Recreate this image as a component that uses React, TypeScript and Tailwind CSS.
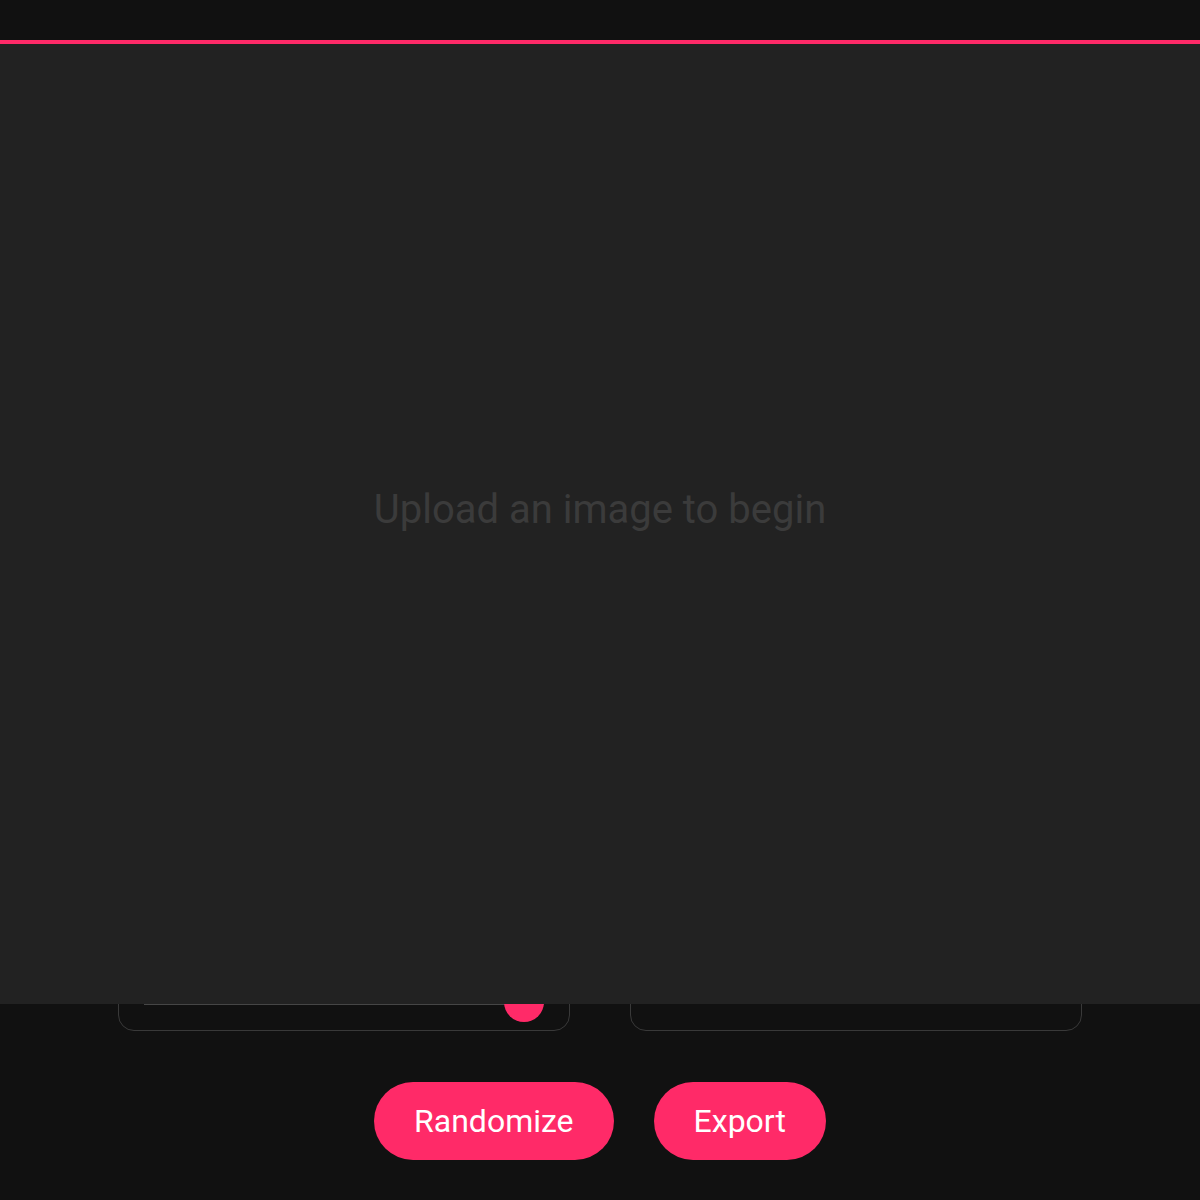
export default function App() {
  return (
    <div className="min-h-screen bg-[#111111] text-white" style={{ fontFamily: 'Roboto, "Noto Sans", sans-serif' }}>
      {/* Header */}
      <header className="h-11 border-b-4 border-[#ff2a68] bg-[#111111]" />

      {/* Preview canvas, fixed over the controls */}
      <div className="fixed left-0 right-0 top-11 z-10 flex h-[80vh] items-center justify-center bg-[#222222] pb-7">
        <p className="text-[40px] text-[#3b3b3b]">Upload an image to begin</p>
      </div>

      {/* Controls */}
      <main className="mx-auto w-[964px] pt-[869px] pb-10">
        <div className="grid grid-cols-2 gap-[60px]">
          <section className="flex flex-col gap-4 rounded-2xl border border-[#393939] px-[25px] pt-6 pb-2">
            <div className="flex items-center justify-between text-lg text-[#cccccc]">
              <span>Intensity</span>
              <span>100</span>
            </div>
            <div className="relative flex h-10 items-center">
              <div className="mt-1 h-[2px] w-full bg-[#464646]" />
              <div className="absolute right-0 top-0 h-10 w-10 rounded-full bg-[#ff2a68]" />
            </div>
          </section>
          <section className="flex flex-col gap-4 rounded-2xl border border-[#393939] px-[25px] pt-6 pb-2">
            <div className="flex items-center justify-between text-lg text-[#cccccc]">
              <span>Mode</span>
              <span>Auto</span>
            </div>
            <div className="h-10" />
          </section>
        </div>

        <div className="mt-[51px] flex justify-center gap-10">
          <button className="rounded-full bg-[#ff2a68] px-10 py-5 text-[32px] leading-[38px] text-white">Randomize</button>
          <button className="rounded-full bg-[#ff2a68] px-10 py-5 text-[32px] leading-[38px] text-white">Export</button>
        </div>
      </main>
    </div>
  );
}
